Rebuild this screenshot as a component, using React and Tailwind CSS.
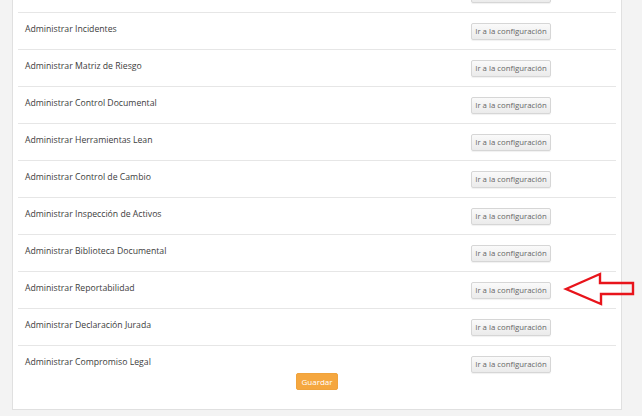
const rows = [
  '',
  'Administrar Incidentes',
  'Administrar Matriz de Riesgo',
  'Administrar Control Documental',
  'Administrar Herramientas Lean',
  'Administrar Control de Cambio',
  'Administrar Inspección de Activos',
  'Administrar Biblioteca Documental',
  'Administrar Reportabilidad',
  'Administrar Declaración Jurada',
  'Administrar Compromiso Legal',
];

function ConfigButton() {
  return (
    <button className="h-[17px] w-[80px] shrink-0 whitespace-nowrap rounded-[2px] border border-[#d6d6d6] bg-gradient-to-b from-[#fafafa] to-[#ebebeb] text-[7.8px] leading-none text-[#666] shadow-[0_1px_1px_rgba(0,0,0,0.06)]">
      Ir a la configuración
    </button>
  );
}

export default function App() {
  return (
    <div className="relative h-[416px] w-[642px] overflow-hidden bg-[#f3f3f3] font-['Open_Sans',sans-serif]">
      <div className="ml-[12px] mt-[-25px] w-[610px] border border-[#e0e0e0] bg-white px-[5px] pb-[19px]">
        <div className="divide-y divide-[#e6e6e6]">
          {rows.map((label, i) => (
            <div key={i} className="flex items-start justify-between pl-[7px] pr-[65px] pt-[10px] pb-[9px] last:pb-0">
              <span className="text-[8.7px] leading-[12px] text-[#3d3d3d]">{label}</span>
              <ConfigButton />
            </div>
          ))}
        </div>
        <div className="flex justify-center">
          <button className="h-[17px] w-[42px] rounded-[2px] border border-[#f0a33c] bg-[#f5a73f] text-[8px] leading-none text-white">
            Guardar
          </button>
        </div>
      </div>

      <svg
        className="absolute left-[563px] top-[270px]"
        width="74"
        height="38"
        viewBox="0 0 74 38"
        fill="none"
      >
        <path
          d="M3 19 L37 4 L37 13 L70 13 L70 24 L38 24 L38 34 Z"
          stroke="#e8141b"
          strokeWidth="2.4"
          strokeLinejoin="miter"
        />
      </svg>
    </div>
  );
}
